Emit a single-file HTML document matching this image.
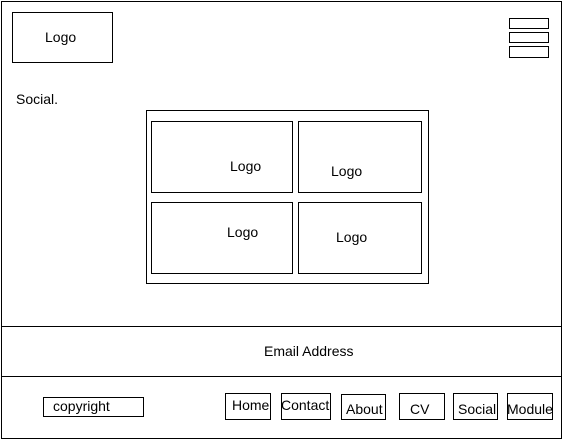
<!DOCTYPE html>
<html><head><style>
body{margin:0;width:566px;height:443px;background:#fff;position:relative;font-family:"Liberation Sans",sans-serif;font-size:14px;color:#000;overflow:hidden}
.b{position:absolute;border:1px solid #000;box-sizing:border-box}
.t{position:absolute;white-space:nowrap;line-height:16px}
</style></head><body>
<div class="b" style="left:1px;top:1px;width:561px;height:438px"></div>
<div class="b" style="left:1px;top:326px;width:561px;height:1px;border-width:1px 0 0 0"></div>
<div class="b" style="left:1px;top:376px;width:561px;height:1px;border-width:1px 0 0 0"></div>
<div class="b" style="left:12px;top:12px;width:101px;height:51px"></div>
<div class="t" style="left:45px;top:29px">Logo</div>
<div class="b" style="left:509px;top:18px;width:40px;height:11px"></div>
<div class="b" style="left:509px;top:32px;width:40px;height:11px"></div>
<div class="b" style="left:509px;top:46px;width:40px;height:12px"></div>
<div class="t" style="left:16px;top:91px">Social.</div>
<div class="b" style="left:146px;top:110px;width:283px;height:174px"></div>
<div class="b" style="left:151px;top:121px;width:142px;height:72px"></div>
<div class="b" style="left:298px;top:121px;width:124px;height:72px"></div>
<div class="b" style="left:151px;top:202px;width:142px;height:72px"></div>
<div class="b" style="left:298px;top:202px;width:124px;height:72px"></div>
<div class="t" style="left:230px;top:158px">Logo</div>
<div class="t" style="left:331px;top:163px">Logo</div>
<div class="t" style="left:227px;top:224px">Logo</div>
<div class="t" style="left:336px;top:229px">Logo</div>
<div class="t" style="left:264px;top:343px">Email Address</div>
<div class="b" style="left:43px;top:397px;width:101px;height:20px"></div>
<div class="t" style="left:53px;top:398px">copyright</div>
<div class="b" style="left:225px;top:393px;width:46px;height:27px"></div>
<div class="t" style="left:232px;top:397px">Home</div>
<div class="b" style="left:281px;top:393px;width:50px;height:27px"></div>
<div class="t" style="left:281px;top:397px">Contact</div>
<div class="b" style="left:341px;top:394px;width:45px;height:26px"></div>
<div class="t" style="left:346px;top:401px">About</div>
<div class="b" style="left:399px;top:393px;width:46px;height:27px"></div>
<div class="t" style="left:410px;top:401px">CV</div>
<div class="b" style="left:453px;top:393px;width:45px;height:27px"></div>
<div class="t" style="left:458px;top:401px">Social</div>
<div class="b" style="left:507px;top:393px;width:46px;height:27px"></div>
<div class="t" style="left:507px;top:401px">Module</div>
</body></html>
